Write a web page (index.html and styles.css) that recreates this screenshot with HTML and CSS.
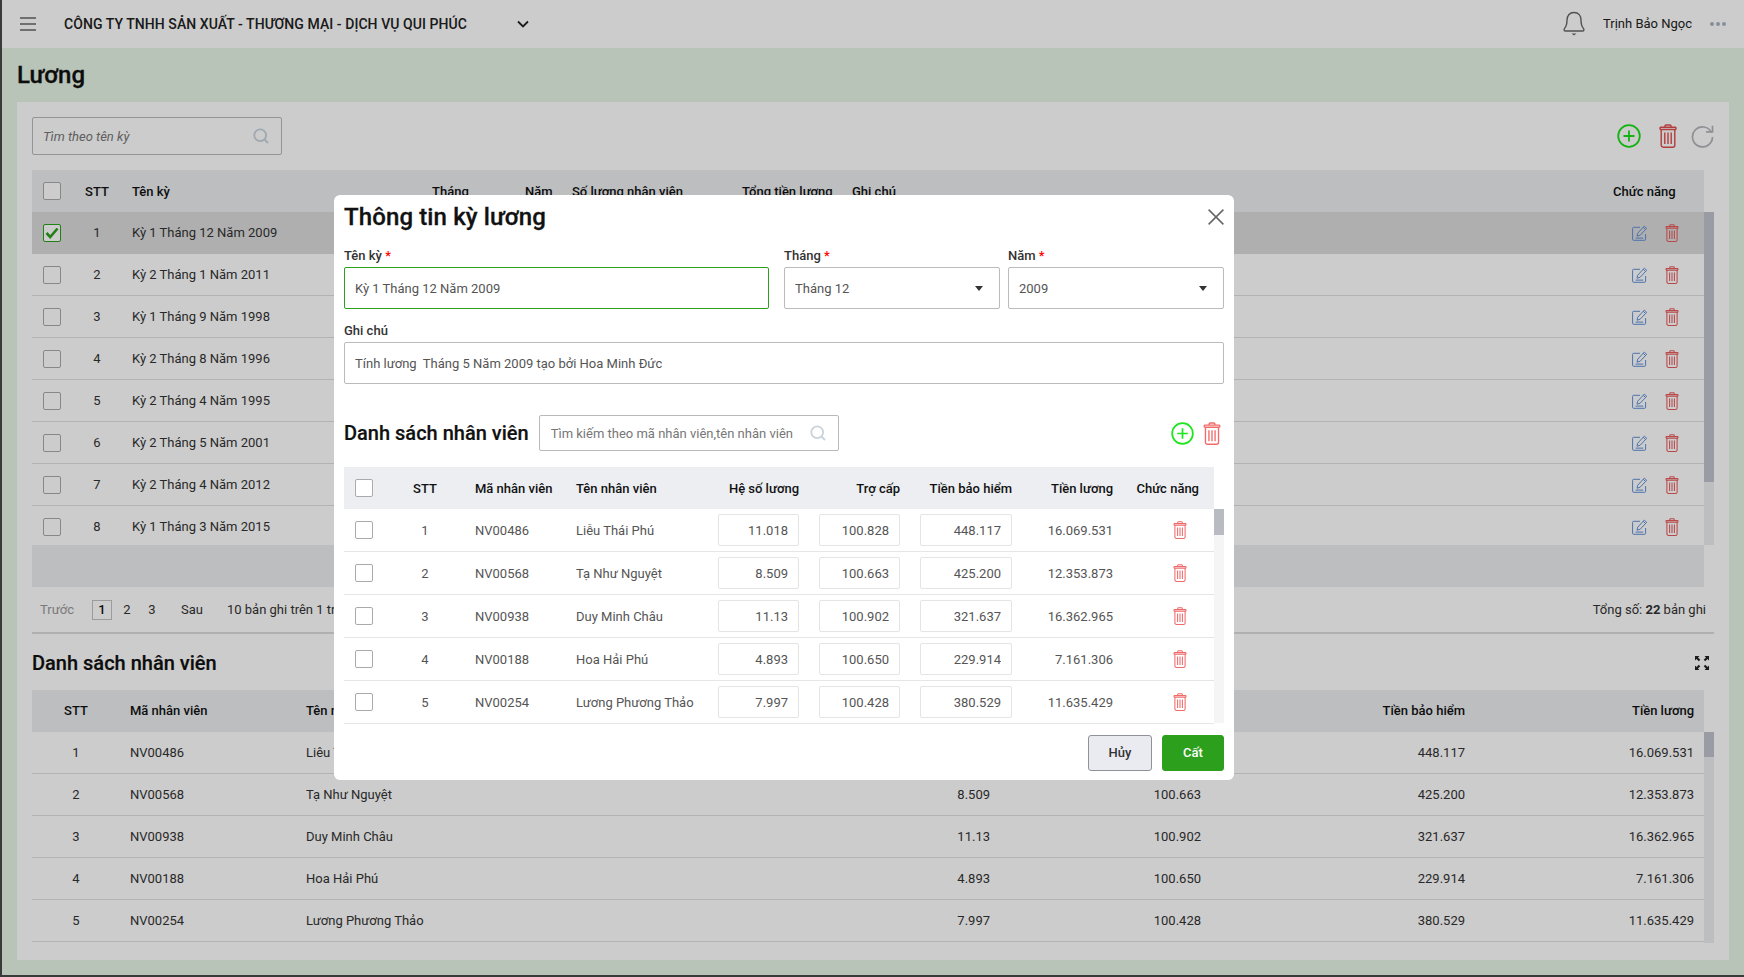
FILE: index.html
```html
<!DOCTYPE html>
<html lang="vi">
<head>
    <meta charset="UTF-8">
    <meta name="viewport" content="width=device-width, initial-scale=1.0">
    <title>Lương</title>
    <link rel="stylesheet" href="styles.css">
</head>
<body>
    <svg class="sprite" width="0" height="0">
        <symbol id="i-trash" viewBox="0 0 18 24">
            <path d="M6 3V2a1 1 0 0 1 1-1h4a1 1 0 0 1 1 1v1M1 3.200h16M1 5.500h16M1 3.200v2.300M17 3.200v2.300M2.200 5.500v15.700a2 2 0 0 0 2 2h9.600a2 2 0 0 0 2-2V5.500M5.800 8.500v11.500M9 8.500v11.500M12.200 8.500v11.500" fill="none" stroke="currentColor" stroke-width="1.400"/>
        </symbol>
        <symbol id="i-plus" viewBox="0 0 24 24">
            <circle cx="12" cy="12" r="10.800" fill="none" stroke="currentColor" stroke-width="1.800"/>
            <path d="M12 6.500v11M6.500 12h11" fill="none" stroke="currentColor" stroke-width="1.800"/>
        </symbol>
        <symbol id="i-search" viewBox="0 0 16 16">
            <circle cx="7.200" cy="7.200" r="5.900" fill="none" stroke="currentColor" stroke-width="1.800"/>
            <path d="M11.500 11.500l3.500 3.500" fill="none" stroke="currentColor" stroke-width="1.800"/>
        </symbol>
        <symbol id="i-edit" viewBox="0 0 16 16">
            <path d="M8 2.300H1.600a1 1 0 0 0-1 1v11a1 1 0 0 0 1 1h11a1 1 0 0 0 1-1V9M3.600 13.100h7.600" fill="none" stroke="currentColor" stroke-width="1"/>
            <path d="M5 11.200l.7-3L12.300 1.100l2.400 2.200-6.600 7-3.100.9zM11.200 2.300l2.400 2.200" fill="none" stroke="currentColor" stroke-width="1"/>
        </symbol>
    </svg>

    <div class="app">
        <header class="topbar">
            <svg class="menu-icon" width="16" height="14" viewBox="0 0 16 14">
                <path d="M0 1h16M0 7h16M0 13h16" stroke="#666" stroke-width="1.600"/>
            </svg>
            <span class="company">CÔNG TY TNHH SẢN XUẤT - THƯƠNG MẠI - DỊCH VỤ QUI PHÚC</span>
            <svg class="company-arrow" width="12" height="8" viewBox="0 0 12 8">
                <path d="M1 1.500l5 5 5-5" fill="none" stroke="#222" stroke-width="1.800"/>
            </svg>
            <svg class="bell" width="24" height="26" viewBox="0 0 24 26">
                <path d="M12 1.500c-4.600 0-7 3.400-7 7.600 0 3.400-.6 6.200-2.400 8.300-1 1.200-.5 2.600 1 2.600h16.800c1.500 0 2-1.400 1-2.600C19.600 15.300 19 12.500 19 9.100c0-4.200-2.400-7.600-7-7.600z" fill="none" stroke="#666" stroke-width="1.400"/>
                <path d="M9.500 22.500h5l-2.500 2z" fill="#666"/>
            </svg>
            <span class="user-name">Trịnh Bảo Ngọc</span>
            <span class="dots"><i></i><i></i><i></i></span>
        </header>

        <h1 class="page-title">Lương</h1>

        <main class="card">
            <div class="toolbar">
                <div class="search search-main">
                    <input class="search-input" type="text" placeholder="Tìm theo tên kỳ">
                    <svg class="search-icon"><use href="#i-search"/></svg>
                </div>
                <div class="toolbar-icons">
                    <svg class="icon-plus"><use href="#i-plus"/></svg>
                    <svg class="icon-trash"><use href="#i-trash"/></svg>
                    <svg class="icon-reload" width="23" height="23" viewBox="0 0 23 23">
                        <path d="M20.500 7.500A10 10 0 1 0 21.500 12" fill="none" stroke="#b2b5ba" stroke-width="1.700"/>
                        <path d="M15 6.800h6.500V.8" fill="none" stroke="#b2b5ba" stroke-width="1.700"/>
                    </svg>
                </div>
            </div>

            <div class="table-wrap">
                <div class="table-side">
                    <table class="grid grid-period">
                        <colgroup>
                            <col class="p-check"><col class="p-stt"><col class="p-name"><col class="p-month"><col class="p-year"><col class="p-count"><col class="p-total"><col><col class="p-action">
                        </colgroup>
                        <thead>
                            <tr>
                                <th class="cell-check"><span class="check"></span></th>
                                <th class="center">STT</th>
                                <th>Tên kỳ</th>
                                <th>Tháng</th>
                                <th>Năm</th>
                                <th>Số lượng nhân viên</th>
                                <th>Tổng tiền lương</th>
                                <th>Ghi chú</th>
                                <th>Chức năng</th>
                            </tr>
                        </thead>
                        <tbody>
                            <tr class="selected">
                                <td class="cell-check"><span class="check checked"><svg width="14" height="12" viewBox="0 0 14 12"><path d="M1.500 6l3.700 4L12.500 1.500" fill="none" stroke="#2ca01c" stroke-width="2.600"/></svg></span></td>
                                <td class="center">1</td><td>Kỳ 1 Tháng 12 Năm 2009</td><td></td><td></td><td></td><td></td><td></td>
                                <td class="cell-action"><svg class="icon-edit"><use href="#i-edit"/></svg><svg class="icon-trash-sm"><use href="#i-trash"/></svg></td>
                            </tr>
                            <tr>
                                <td class="cell-check"><span class="check"></span></td>
                                <td class="center">2</td><td>Kỳ 2 Tháng 1 Năm 2011</td><td></td><td></td><td></td><td></td><td></td>
                                <td class="cell-action"><svg class="icon-edit"><use href="#i-edit"/></svg><svg class="icon-trash-sm"><use href="#i-trash"/></svg></td>
                            </tr>
                            <tr>
                                <td class="cell-check"><span class="check"></span></td>
                                <td class="center">3</td><td>Kỳ 1 Tháng 9 Năm 1998</td><td></td><td></td><td></td><td></td><td></td>
                                <td class="cell-action"><svg class="icon-edit"><use href="#i-edit"/></svg><svg class="icon-trash-sm"><use href="#i-trash"/></svg></td>
                            </tr>
                            <tr>
                                <td class="cell-check"><span class="check"></span></td>
                                <td class="center">4</td><td>Kỳ 2 Tháng 8 Năm 1996</td><td></td><td></td><td></td><td></td><td></td>
                                <td class="cell-action"><svg class="icon-edit"><use href="#i-edit"/></svg><svg class="icon-trash-sm"><use href="#i-trash"/></svg></td>
                            </tr>
                            <tr>
                                <td class="cell-check"><span class="check"></span></td>
                                <td class="center">5</td><td>Kỳ 2 Tháng 4 Năm 1995</td><td></td><td></td><td></td><td></td><td></td>
                                <td class="cell-action"><svg class="icon-edit"><use href="#i-edit"/></svg><svg class="icon-trash-sm"><use href="#i-trash"/></svg></td>
                            </tr>
                            <tr>
                                <td class="cell-check"><span class="check"></span></td>
                                <td class="center">6</td><td>Kỳ 2 Tháng 5 Năm 2001</td><td></td><td></td><td></td><td></td><td></td>
                                <td class="cell-action"><svg class="icon-edit"><use href="#i-edit"/></svg><svg class="icon-trash-sm"><use href="#i-trash"/></svg></td>
                            </tr>
                            <tr>
                                <td class="cell-check"><span class="check"></span></td>
                                <td class="center">7</td><td>Kỳ 2 Tháng 4 Năm 2012</td><td></td><td></td><td></td><td></td><td></td>
                                <td class="cell-action"><svg class="icon-edit"><use href="#i-edit"/></svg><svg class="icon-trash-sm"><use href="#i-trash"/></svg></td>
                            </tr>
                            <tr>
                                <td class="cell-check"><span class="check"></span></td>
                                <td class="center">8</td><td>Kỳ 1 Tháng 3 Năm 2015</td><td></td><td></td><td></td><td></td><td></td>
                                <td class="cell-action"><svg class="icon-edit"><use href="#i-edit"/></svg><svg class="icon-trash-sm"><use href="#i-trash"/></svg></td>
                            </tr>
                        </tbody>
                    </table>
                    <div class="table-foot"></div>
                </div>
                <div class="scroll scroll-period"><div class="thumb"></div></div>
            </div>

            <div class="pager">
                <span class="pager-off">Trước</span>
                <span class="page-num active">1</span>
                <span class="page-num">2</span>
                <span class="page-num">3</span>
                <span class="pager-next">Sau</span>
                <span class="pager-size">10 bản ghi trên 1 trang</span>
                <span class="pager-total">Tổng số: <b>22</b> bản ghi</span>
            </div>

            <div class="section-head">
                <h2 class="section-title">Danh sách nhân viên</h2>
                <svg class="expand" width="14" height="14" viewBox="0 0 14 14">
                    <path d="M0 0h4.500L3 1.500l2.300 2.300-1.500 1.500L1.500 3 0 4.500zM14 0H9.500L11 1.500 8.700 3.800l1.500 1.500L12.500 3 14 4.500zM0 14h4.500L3 12.500l2.300-2.300-1.500-1.500L1.500 11 0 9.500zM14 14H9.500l1.500-1.500-2.300-2.300 1.500-1.500 2.300 2.300L14 9.500z" fill="#222"/>
                </svg>
            </div>

            <div class="table-wrap">
                <table class="grid grid-staff">
                    <colgroup>
                        <col class="s-stt"><col class="s-code"><col><col class="s-rate"><col class="s-extra"><col class="s-ins"><col class="s-pay">
                    </colgroup>
                    <thead>
                        <tr>
                            <th class="center">STT</th><th>Mã nhân viên</th><th>Tên nhân viên</th>
                            <th></th><th></th><th class="right">Tiền bảo hiểm</th><th class="right">Tiền lương</th>
                        </tr>
                    </thead>
                    <tbody>
                        <tr><td class="center">1</td><td>NV00486</td><td>Liêu Thái Phú</td><td></td><td></td><td class="right">448.117</td><td class="right">16.069.531</td></tr>
                        <tr><td class="center">2</td><td>NV00568</td><td>Tạ Như Nguyệt</td><td class="right">8.509</td><td class="right">100.663</td><td class="right">425.200</td><td class="right">12.353.873</td></tr>
                        <tr><td class="center">3</td><td>NV00938</td><td>Duy Minh Châu</td><td class="right">11.13</td><td class="right">100.902</td><td class="right">321.637</td><td class="right">16.362.965</td></tr>
                        <tr><td class="center">4</td><td>NV00188</td><td>Hoa Hải Phú</td><td class="right">4.893</td><td class="right">100.650</td><td class="right">229.914</td><td class="right">7.161.306</td></tr>
                        <tr><td class="center">5</td><td>NV00254</td><td>Lương Phương Thảo</td><td class="right">7.997</td><td class="right">100.428</td><td class="right">380.529</td><td class="right">11.635.429</td></tr>
                    </tbody>
                </table>
                <div class="scroll scroll-staff"><div class="thumb"></div></div>
            </div>
        </main>

        <div class="mask"></div>

        <section class="modal">
            <div class="modal-head">
                <h2 class="modal-title">Thông tin kỳ lương</h2>
                <svg class="modal-close" width="16" height="16" viewBox="0 0 16 16">
                    <path d="M.6.6l14.800 14.800M15.400.6L.6 15.400" stroke="#666" stroke-width="1.500"/>
                </svg>
            </div>

            <div class="form-row">
                <div class="field field-name">
                    <label class="field-label">Tên kỳ <span class="req">*</span></label>
                    <input class="field-input focused" type="text" value="Kỳ 1 Tháng 12 Năm 2009">
                </div>
                <div class="field field-pick">
                    <label class="field-label">Tháng <span class="req">*</span></label>
                    <div class="field-input picker"><span>Tháng 12</span><i class="caret"></i></div>
                </div>
                <div class="field field-pick">
                    <label class="field-label">Năm <span class="req">*</span></label>
                    <div class="field-input picker"><span>2009</span><i class="caret"></i></div>
                </div>
            </div>

            <div class="form-row form-note">
                <div class="field field-full">
                    <label class="field-label">Ghi chú</label>
                    <input class="field-input" type="text" value="Tính lương  Tháng 5 Năm 2009 tạo bởi Hoa Minh Đức">
                </div>
            </div>

            <div class="list-head">
                <h3 class="list-title">Danh sách nhân viên</h3>
                <div class="search search-modal">
                    <input class="search-input plain" type="text" placeholder="Tìm kiếm theo mã nhân viên,tên nhân viên">
                    <svg class="search-icon"><use href="#i-search"/></svg>
                </div>
                <div class="list-icons">
                    <svg class="icon-plus bright"><use href="#i-plus"/></svg>
                    <svg class="icon-trash bright"><use href="#i-trash"/></svg>
                </div>
            </div>

            <div class="modal-table">
                <table class="grid grid-modal">
                    <colgroup>
                        <col class="m-check"><col class="m-stt"><col class="m-code"><col class="m-name"><col class="m-num"><col class="m-num"><col class="m-ins"><col class="m-num"><col>
                    </colgroup>
                    <thead>
                        <tr>
                            <th class="cell-check"><span class="check"></span></th>
                            <th class="center">STT</th><th>Mã nhân viên</th><th>Tên nhân viên</th>
                            <th class="right">Hệ số lương</th><th class="right">Trợ cấp</th><th class="right">Tiền bảo hiểm</th><th class="right">Tiền lương</th><th class="head-action">Chức năng</th>
                        </tr>
                    </thead>
                    <tbody>
                        <tr>
                            <td class="cell-check"><span class="check"></span></td><td class="center">1</td><td>NV00486</td><td>Liễu Thái Phú</td>
                            <td><input class="num-input" type="text" value="11.018"></td><td><input class="num-input" type="text" value="100.828"></td><td><input class="num-input" type="text" value="448.117"></td>
                            <td class="right">16.069.531</td><td class="cell-remove"><svg class="icon-trash-sm bright"><use href="#i-trash"/></svg></td>
                        </tr>
                        <tr>
                            <td class="cell-check"><span class="check"></span></td><td class="center">2</td><td>NV00568</td><td>Tạ Như Nguyệt</td>
                            <td><input class="num-input" type="text" value="8.509"></td><td><input class="num-input" type="text" value="100.663"></td><td><input class="num-input" type="text" value="425.200"></td>
                            <td class="right">12.353.873</td><td class="cell-remove"><svg class="icon-trash-sm bright"><use href="#i-trash"/></svg></td>
                        </tr>
                        <tr>
                            <td class="cell-check"><span class="check"></span></td><td class="center">3</td><td>NV00938</td><td>Duy Minh Châu</td>
                            <td><input class="num-input" type="text" value="11.13"></td><td><input class="num-input" type="text" value="100.902"></td><td><input class="num-input" type="text" value="321.637"></td>
                            <td class="right">16.362.965</td><td class="cell-remove"><svg class="icon-trash-sm bright"><use href="#i-trash"/></svg></td>
                        </tr>
                        <tr>
                            <td class="cell-check"><span class="check"></span></td><td class="center">4</td><td>NV00188</td><td>Hoa Hải Phú</td>
                            <td><input class="num-input" type="text" value="4.893"></td><td><input class="num-input" type="text" value="100.650"></td><td><input class="num-input" type="text" value="229.914"></td>
                            <td class="right">7.161.306</td><td class="cell-remove"><svg class="icon-trash-sm bright"><use href="#i-trash"/></svg></td>
                        </tr>
                        <tr>
                            <td class="cell-check"><span class="check"></span></td><td class="center">5</td><td>NV00254</td><td>Lương Phương Thảo</td>
                            <td><input class="num-input" type="text" value="7.997"></td><td><input class="num-input" type="text" value="100.428"></td><td><input class="num-input" type="text" value="380.529"></td>
                            <td class="right">11.635.429</td><td class="cell-remove"><svg class="icon-trash-sm bright"><use href="#i-trash"/></svg></td>
                        </tr>
                    </tbody>
                </table>
                <div class="scroll scroll-modal"><div class="thumb"></div></div>
            </div>

            <div class="modal-foot">
                <button class="btn btn-cancel">Hủy</button>
                <button class="btn btn-save">Cất</button>
            </div>
        </section>
    </div>
</body>
</html>
```
FILE: styles.css
```css
* {
    box-sizing: border-box;
}
html, body {
    margin: 0;
    height: 977px;
    overflow: hidden;
}
body {
    background-color: #3a3a3a;
    padding: 0 0 2px 2px;
    font-family: Roboto, "Noto Sans", sans-serif;
    font-size: 13px;
    color: #333;
}
.sprite {
    position: absolute;
}

/* page behind the dialog */
.app {
    position: relative;
    height: 975px;
    background-color: #e6f5e6;
    overflow: hidden;
}
.mask {
    position: absolute;
    inset: 0;
    background-color: rgba(0, 0, 0, 0.2);
}
.topbar {
    display: flex;
    align-items: center;
    height: 48px;
    padding-left: 18px;
    background-color: #fff;
}
.company {
    margin-left: 28px;
    font-size: 14px;
    font-weight: 500;
    letter-spacing: 0.06px;
    color: #222;
}
.company-arrow {
    margin-left: 50px;
}
.bell {
    margin-left: auto;
}
.user-name {
    margin-left: 17px;
    padding-bottom: 1px;
    font-size: 13px;
    color: #222;
}
.dots {
    display: flex;
    gap: 2px;
    margin: 0 18px 0 18px;
}
.dots i {
    width: 4px;
    height: 4px;
    border-radius: 50%;
    background-color: #a9b4c4;
}
.page-title {
    margin: 0;
    height: 54px;
    padding-left: 15px;
    font-size: 24px;
    font-weight: 500;
    line-height: 54px;
    color: #111;
    -webkit-text-stroke: 0.3px #111;
}
.card {
    height: 858px;
    margin: 0 15px;
    padding: 15px;
    background-color: #fff;
}
.toolbar {
    display: flex;
    align-items: center;
    justify-content: space-between;
    height: 38px;
    margin-bottom: 15px;
}
.toolbar-icons {
    display: flex;
    align-items: center;
}
.icon-plus {
    width: 24px;
    height: 24px;
    color: #18e018;
}
.icon-trash {
    width: 18px;
    height: 24px;
    margin-left: 18px;
    color: #e04c4c;
}
.icon-reload {
    margin: 0 0 0 14px;
}
.icon-trash-sm {
    width: 14px;
    height: 18px;
    color: #e85c5c;
}
.icon-edit {
    width: 16px;
    height: 16px;
    color: #5f8fd8;
}
.icon-plus.bright {
    width: 23px;
    height: 23px;
    color: #1ee51e;
}
.icon-trash.bright {
    width: 18px;
    height: 23px;
    margin-left: 9px;
    color: #f06a6a;
}
.icon-trash-sm.bright {
    color: #f06a6a;
}

/* search boxes */
.search {
    display: flex;
    align-items: center;
    justify-content: space-between;
    border: 1px solid #b9b9b9;
    border-radius: 2px;
    background-color: #fff;
}
.search-main {
    width: 250px;
    height: 38px;
    padding: 0 12px 0 10px;
}
.search-modal {
    width: 300px;
    height: 36px;
    margin-left: 10px;
    padding: 0 12px 0 11px;
}
.search-input {
    flex: 1;
    min-width: 0;
    border: 0;
    outline: 0;
    padding: 0;
    background: transparent;
    font: italic 13px Roboto, sans-serif;
}
.search-input::placeholder {
    color: #777;
}
.search-input.plain {
    font-style: normal;
}
.search-icon {
    width: 16px;
    height: 16px;
    color: #c8d3dc;
}

/* tables */
.table-wrap {
    display: flex;
    align-items: flex-start;
}
.table-side {
    width: 1672px;
}
.grid {
    width: 1672px;
    flex: none;
    border-collapse: separate;
    border-spacing: 0;
    table-layout: fixed;
}
.grid th {
    height: 42px;
    padding: 0 10px;
    background-color: #eceef1;
    font-weight: 500;
    text-align: left;
    white-space: nowrap;
    color: #111;
}
.grid td {
    height: 42px;
    padding: 0 10px;
    border-bottom: 1px solid #e0e0e0;
    white-space: nowrap;
}
.grid .center {
    text-align: center;
}
.grid .right {
    text-align: right;
}
.grid .cell-check {
    padding: 0 0 0 11px;
}
.grid .selected td {
    background-color: #dbdbdb;
    border-bottom-color: #dbdbdb;
}
.grid-staff th {
    padding-bottom: 2px;
}
.cell-action {
    text-align: right;
}
.cell-action svg {
    vertical-align: middle;
}
.cell-action .icon-edit {
    margin-right: 17px;
}
.cell-action .icon-trash-sm {
    margin-right: 15px;
}
.check {
    display: flex;
    align-items: center;
    justify-content: center;
    width: 18px;
    height: 18px;
    border: 1px solid #aaa;
    border-radius: 2px;
    background-color: #fff;
}
.check.checked {
    border-color: #2ca01c;
}
.p-check { width: 40px; }
.p-stt { width: 50px; }
.p-name { width: 300px; }
.p-month { width: 93px; }
.p-year { width: 47px; }
.p-count { width: 170px; }
.p-total { width: 110px; }
.p-action { width: 101px; }
.s-stt { width: 88px; }
.s-code { width: 176px; }
.s-rate { width: 200px; }
.s-extra { width: 211px; }
.s-ins { width: 264px; }
.s-pay { width: 229px; }
.table-foot {
    position: relative;
    height: 42px;
    margin-top: -3px;
    background-color: #eceef1;
}
.scroll {
    flex: none;
    width: 10px;
    background-color: #eceef1;
}
.thumb {
    background-color: #c0c4cd;
}
.scroll-period {
    height: 333px;
    margin-top: 42px;
}
.scroll-period .thumb {
    height: 270px;
}
.scroll-staff {
    height: 211px;
    margin-top: 42px;
}
.scroll-staff .thumb {
    height: 25px;
}

/* pager */
.pager {
    display: flex;
    align-items: center;
    height: 47px;
    padding: 0 8px 0 8px;
    border-bottom: 2px solid #dcdcdc;
}
.pager-off {
    margin-right: 18px;
    color: #999;
}
.page-num {
    display: flex;
    align-items: center;
    justify-content: center;
    width: 20px;
    height: 20px;
    margin-right: 5px;
}
.page-num.active {
    border: 1px solid #c4c4c4;
    font-weight: 500;
    color: #111;
}
.pager-next {
    margin-left: 14px;
}
.pager-size {
    margin-left: 24px;
}
.pager-total {
    margin-left: auto;
}
.pager-total b {
    font-weight: 700;
}
.section-head {
    display: flex;
    align-items: center;
    justify-content: space-between;
    height: 56px;
    padding: 1px 5px 0 0;
}
.section-title {
    margin: 0;
    font-size: 20px;
    font-weight: 500;
    color: #111;
    -webkit-text-stroke: 0.2px #111;
}

/* dialog */
.modal {
    position: absolute;
    left: 332px;
    top: 195px;
    width: 900px;
    height: 585px;
    padding: 0 10px;
    border-radius: 6px;
    background-color: #fff;
}
.modal-head {
    display: flex;
    align-items: flex-start;
    justify-content: space-between;
    height: 50px;
    padding-top: 5px;
}
.modal-title {
    margin: 0;
    font-size: 24px;
    font-weight: 500;
    line-height: 34px;
    letter-spacing: 0.12px;
    color: #111;
    -webkit-text-stroke: 0.3px #111;
}
.modal-close {
    margin-top: 9px;
}
.form-row {
    display: flex;
    gap: 8px;
}
.form-note {
    margin-top: 11px;
}
.field-name {
    width: 425px;
    margin-right: 7px;
}
.field-pick {
    width: 216px;
}
.field-full {
    width: 880px;
}
.field-label {
    display: block;
    height: 22px;
    font-weight: 500;
    line-height: 22px;
}
.req {
    color: #f00;
}
.field-input {
    display: block;
    width: 100%;
    height: 42px;
    padding: 0 10px;
    border: 1px solid #bbb;
    border-radius: 2px;
    outline: 0;
    background-color: #fff;
    font: 13px Roboto, sans-serif;
    color: #555;
}
.field-input.focused {
    border-color: #2ca01c;
}
.picker {
    display: flex;
    align-items: center;
    justify-content: space-between;
    padding-right: 16px;
}
.caret {
    border-top: 5px solid #333;
    border-left: 4.500px solid transparent;
    border-right: 4.500px solid transparent;
}
.list-head {
    display: flex;
    align-items: center;
    height: 36px;
    margin-top: 31px;
}
.list-title {
    margin: 0;
    font-size: 20px;
    font-weight: 500;
    color: #111;
    -webkit-text-stroke: 0.2px #111;
}
.list-icons {
    display: flex;
    align-items: center;
    margin-left: auto;
    padding-right: 3px;
}
.modal-table {
    display: flex;
    align-items: flex-start;
    margin-top: 16px;
}
.grid-modal {
    width: 870px;
}
.grid-modal td {
    height: 43px;
    color: #555;
    border-bottom-color: #e6e6e6;
}
.m-check { width: 41px; }
.m-stt { width: 80px; }
.m-code { width: 101px; }
.m-name { width: 142px; }
.m-num { width: 101px; }
.m-ins { width: 112px; }
.head-action {
    padding-right: 15px !important;
    text-align: right !important;
}
.cell-remove {
    text-align: right;
    padding-right: 27px !important;
}
.cell-remove svg {
    vertical-align: middle;
}
.num-input {
    display: block;
    width: 100%;
    height: 32px;
    padding: 0 10px;
    border: 1px solid #e4e4e4;
    border-radius: 2px;
    outline: 0;
    font: 13px Roboto, sans-serif;
    color: #555;
    text-align: right;
}
.scroll-modal {
    height: 214px;
    margin-top: 42px;
    background-color: #f5f5f5;
}
.scroll-modal .thumb {
    height: 26px;
    background-color: #b8bcc2;
}
.modal-foot {
    display: flex;
    justify-content: flex-end;
    gap: 10px;
    margin-top: 11px;
}
.btn {
    height: 36px;
    padding: 0 0 2px;
    border: 1px solid #2ca01c;
    border-radius: 3px;
    font: 500 13px Roboto, sans-serif;
}
.btn-cancel {
    width: 64px;
    border-color: #8f9298;
    background-color: #e9ebf0;
    color: #333;
}
.btn-save {
    width: 62px;
    background-color: #2ca01c;
    color: #fff;
}
```
